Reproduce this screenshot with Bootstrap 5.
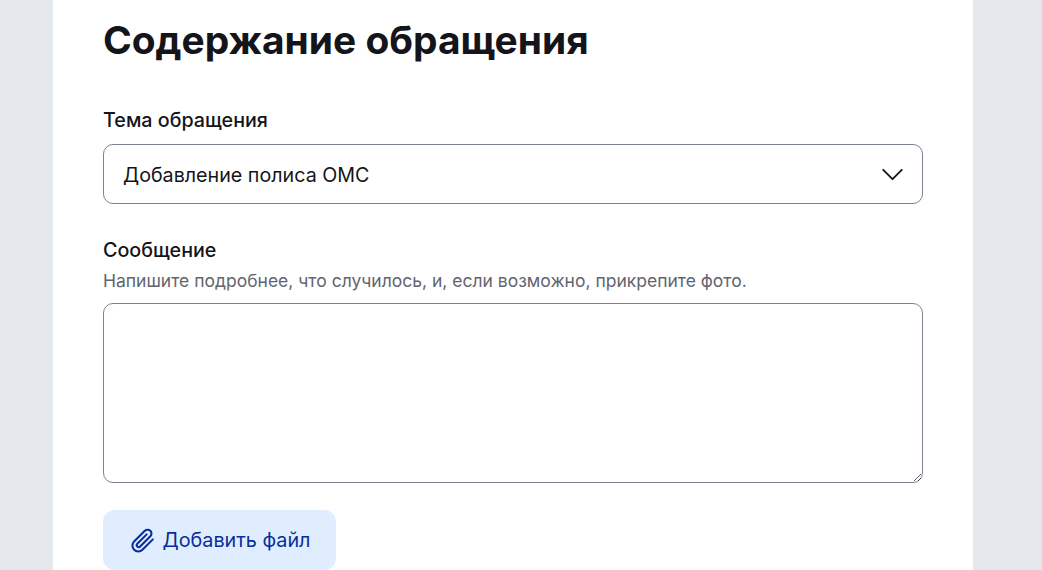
<!DOCTYPE html>
<html lang="ru">
<head>
    <meta charset="UTF-8">
    <meta name="viewport" content="width=device-width, initial-scale=1.0">
    <title>Содержание обращения</title>
    <link rel="stylesheet" href="https://cdn.jsdelivr.net/npm/bootstrap@5.3.0/dist/css/bootstrap.min.css">
    <style>
        body {
            background-color: #e4e7ec;
            font-family: 'Inter', 'Liberation Sans', sans-serif;
            color: #14151a;
            overflow: hidden;
        }
        .sheet {
            width: 920px;
            min-height: 100vh;
            margin-left: 53px;
            padding: 15px 50px 0;
            background: #ffffff;
        }
        .sheet-title {
            font-size: 38.9px;
            line-height: 50px;
            font-weight: 700;
            margin-bottom: 42px;
        }
        .field-label {
            font-size: 19.7px;
            line-height: 26px;
            font-weight: 500;
            margin-bottom: 11px;
            display: block;
        }
        .message-label {
            padding-top: 9px;
            margin-bottom: 0;
        }
        .field-hint {
            font-size: 17.5px;
            line-height: 24px;
            color: #62656f;
            margin-top: 6px;
            margin-bottom: 10px;
        }
        .topic-select, .message-input {
            border: 1px solid #7b8290;
            border-radius: 10px;
            color: #14151a;
            font-size: 19.7px;
        }
        .topic-select {
            height: 60px;
            padding: 3px 60px 0 19px;
            background-image: url("data:image/svg+xml,%3csvg xmlns='http://www.w3.org/2000/svg' viewBox='0 0 24 14'%3e%3cpath fill='none' stroke='%2314151a' stroke-width='2' stroke-linecap='round' stroke-linejoin='round' d='M2 2l10 10L22 2'/%3e%3c/svg%3e");
            background-position: right 18px top 23px;
            background-size: 23px 13px;
        }
        .message-input {
            height: 180px;
            padding: 16px 20px;
        }
        .attach-btn {
            height: 60px;
            width: 233px;
            margin-top: 27px;
            padding: 8px 0 6px;
            background: #dfedff;
            color: #0a2d9c;
            border: 0;
            border-radius: 12px;
            font-size: 19.8px;
            font-weight: 400;
        }
        .attach-btn:hover { background: #d2e5ff; color: #0a2d9c; }
    </style>
</head>
<body>
    <div class="sheet">
        <h1 class="sheet-title">Содержание обращения</h1>

        <div>
            <label class="field-label" for="topic">Тема обращения</label>
            <select id="topic" class="form-select topic-select mb-4">
                <option>Добавление полиса ОМС</option>
            </select>
        </div>

        <div>
            <label class="field-label message-label" for="message">Сообщение</label>
            <div class="field-hint">Напишите подробнее, что случилось, и, если возможно, прикрепите фото.</div>
            <textarea id="message" class="form-control message-input"></textarea>
        </div>

        <button type="button" class="btn attach-btn d-flex align-items-center justify-content-center gap-2">
            <svg width="26" height="26" viewBox="0 0 24 24" fill="none" stroke="currentColor" stroke-width="1.9" stroke-linecap="round" stroke-linejoin="round"><path d="M22 10.5l-9.6 9.6a5.4 5.4 0 0 1-7.7-7.6l9.9-9.9a3.6 3.6 0 0 1 5.1 5.1l-9.4 9.4a1.8 1.8 0 0 1-2.6-2.6l8.6-8.6"/></svg>
            <span>Добавить файл</span>
        </button>
    </div>
    <script src="https://cdn.jsdelivr.net/npm/bootstrap@5.3.0/dist/js/bootstrap.bundle.min.js"></script>
</body>
</html>
